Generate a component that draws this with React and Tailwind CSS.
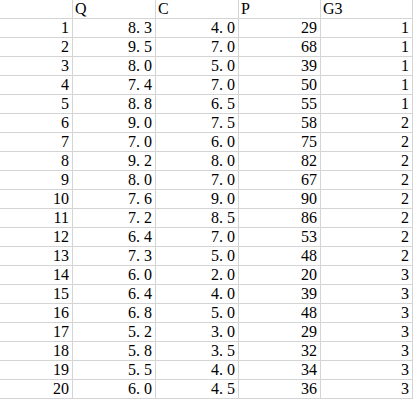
import React from "react";

const rows = [
  [1, "8.3", "4.0", 29, 1],
  [2, "9.5", "7.0", 68, 1],
  [3, "8.0", "5.0", 39, 1],
  [4, "7.4", "7.0", 50, 1],
  [5, "8.8", "6.5", 55, 1],
  [6, "9.0", "7.5", 58, 2],
  [7, "7.0", "6.0", 75, 2],
  [8, "9.2", "8.0", 82, 2],
  [9, "8.0", "7.0", 67, 2],
  [10, "7.6", "9.0", 90, 2],
  [11, "7.2", "8.5", 86, 2],
  [12, "6.4", "7.0", 53, 2],
  [13, "7.3", "5.0", 48, 2],
  [14, "6.0", "2.0", 20, 3],
  [15, "6.4", "4.0", 39, 3],
  [16, "6.8", "5.0", 48, 3],
  [17, "5.2", "3.0", 29, 3],
  [18, "5.8", "3.5", 32, 3],
  [19, "5.5", "4.0", 34, 3],
  [20, "6.0", "4.5", 36, 3],
];

function Num({ v }) {
  const s = String(v);
  if (s.includes(".")) {
    const [a, b] = s.split(".");
    return (
      <span>
        {a}
        <span className="inline-block w-2 text-left">.</span>
        {b}
      </span>
    );
  }
  return <span>{s}</span>;
}

const cell =
  "h-[19px] border-r border-b border-[#d4d4d4] flex items-center leading-none";

export default function App() {
  const headers = ["", "Q", "C", "P", "G3"];
  return (
    <div
      className="w-[414px] h-[400px] bg-white text-black overflow-hidden"
      style={{ fontFamily: '"Liberation Serif", "Noto Sans CJK SC", serif' }}
    >
      <div className="grid grid-cols-[73px_83px_83px_82px_92px] text-[16px]">
        {headers.map((h, i) => (
          <div key={"h" + i} className={cell + " justify-start pl-[2px]"}>
            {h}
          </div>
        ))}
        {rows.map((r, ri) =>
          r.map((v, ci) => (
            <div key={ri + "-" + ci} className={cell + " justify-end pr-[3px]"}>
              <Num v={v} />
            </div>
          ))
        )}
      </div>
    </div>
  );
}
